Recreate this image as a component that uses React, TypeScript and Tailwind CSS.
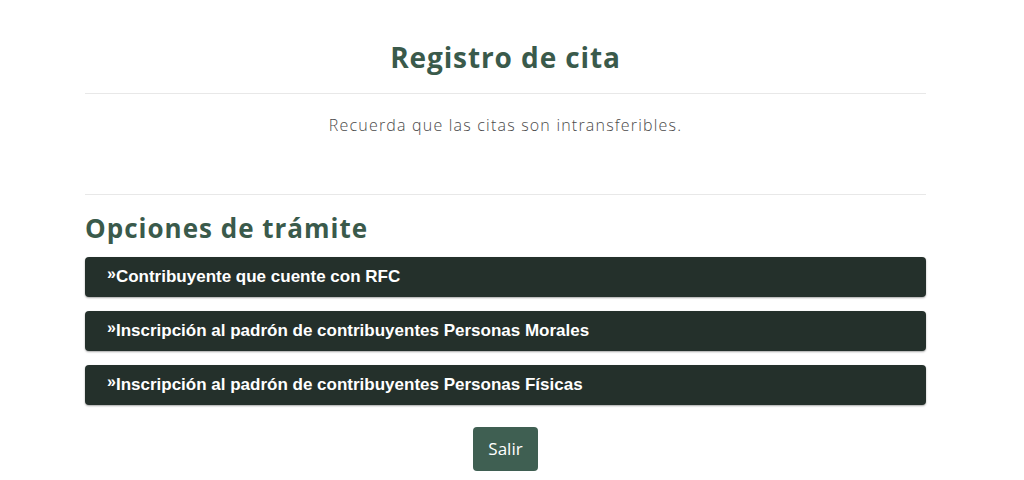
const opciones = [
  "Contribuyente que cuente con RFC",
  "Inscripción al padrón de contribuyentes Personas Morales",
  "Inscripción al padrón de contribuyentes Personas Físicas",
];

export default function App() {
  return (
    <div className="min-h-screen bg-white">
      <div className="ml-[85px] w-[841px] pt-[38px]" style={{ fontFamily: "'Open Sans', sans-serif" }}>
        <h1 className="text-center text-[28px] font-bold leading-[38px] tracking-[0.9px] text-[#3a5a4b]">Registro de cita</h1>
        <hr className="mt-[17px] border-t border-[#e8e8e8]" />
        <p className="mt-[20px] text-center text-[16px] font-light leading-[22px] tracking-[1.2px] text-[#4a4a4a]">
          Recuerda que las citas son intransferibles.
        </p>
        <hr className="mt-[58px] border-t border-[#e8e8e8]" />
        <h2 className="mt-[16px] text-[26px] font-bold leading-[34px] tracking-[1px] text-[#3a5a4b]">Opciones de trámite</h2>
        <div className="mt-[12px] flex flex-col gap-[14px]">
          {opciones.map((o) => (
            <button
              key={o}
              className="flex h-[40px] w-full items-center rounded-[4px] bg-[#24302b] px-[22px] text-left text-[17px] font-bold text-white shadow-[0_1px_2px_rgba(0,0,0,0.35)]"
              style={{ fontFamily: "'Liberation Sans', Arial, sans-serif" }}
            >
              <span className="-translate-y-[3px] text-[16px]">»</span>
              {o}
            </button>
          ))}
        </div>
        <div className="mt-[22px] flex justify-center">
          <button className="h-[44px] w-[65px] rounded-[4px] bg-[#3f5f52] text-[17px] text-white">Salir</button>
        </div>
      </div>
    </div>
  );
}
